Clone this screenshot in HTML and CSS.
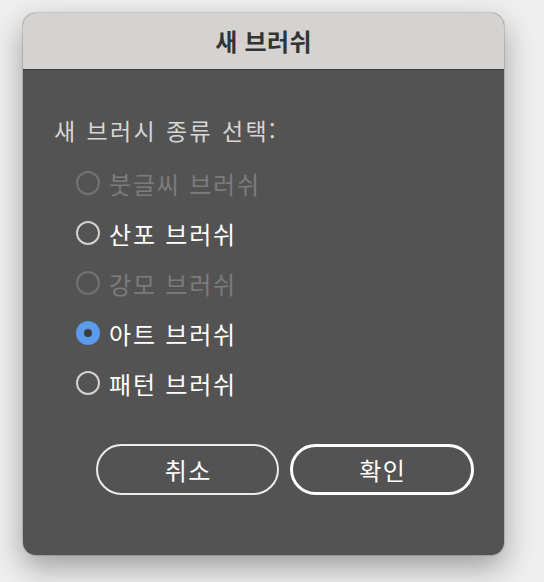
FILE: index.html
```html
<!DOCTYPE html>
<html lang="ko">
<head>
<meta charset="utf-8">
<title>새 브러쉬</title>
<link rel="stylesheet" href="styles.css">
</head>
<body>
<div class="dialog">
  <div class="titlebar">새 브러쉬</div>
  <div class="content">
    <div class="prompt">새 브러시 종류 선택:</div>
    <div class="options">
      <div class="option disabled"><span class="radio"></span><span class="label">붓글씨 브러쉬</span></div>
      <div class="option"><span class="radio"></span><span class="label">산포 브러쉬</span></div>
      <div class="option disabled"><span class="radio"></span><span class="label">강모 브러쉬</span></div>
      <div class="option checked"><span class="radio"></span><span class="label">아트 브러쉬</span></div>
      <div class="option"><span class="radio"></span><span class="label">패턴 브러쉬</span></div>
    </div>
    <div class="buttons">
      <div class="btn">취소</div>
      <div class="btn primary">확인</div>
    </div>
  </div>
</div>
</body>
</html>
```
FILE: styles.css
```css
html, body {
  margin: 0;
  padding: 0;
}
body {
  width: 544px;
  height: 582px;
  background: #efefef;
  font-family: "Noto Sans CJK KR", "Noto Sans", sans-serif;
  overflow: hidden;
}
.dialog {
  margin: 13px 0 0 23px;
  width: 481px;
  height: 542px;
  border-radius: 13px;
  overflow: hidden;
  background: #535353;
  box-shadow: 0 12px 30px rgba(0,0,0,0.35), 0 0 0 1px rgba(0,0,0,0.12);
  display: flex;
  flex-direction: column;
}
.titlebar {
  height: 56px;
  flex: none;
  background: #d4d3d1;
  border-bottom: 1px solid #3a3a3a;
  color: #333333;
  font-weight: 700;
  font-size: 24px;
  letter-spacing: 0.3px;
  line-height: 56px;
  text-align: center;
}
.content {
  padding: 45px 0 0 31px;
}
.prompt {
  color: #d6d6d6;
  font-size: 23px;
  line-height: 30px;
  letter-spacing: 2.4px;
}
.options {
  margin-top: 13px;
  padding-left: 22px;
  display: flex;
  flex-direction: column;
}
.option {
  height: 50px;
  display: flex;
  align-items: center;
  gap: 9px;
  color: #ffffff;
  font-size: 24px;
  letter-spacing: 1.8px;
}
.radio {
  width: 24px;
  height: 24px;
  box-sizing: border-box;
  border: 2px solid #d2d2d2;
  border-radius: 50%;
  flex: none;
  display: flex;
  align-items: center;
  justify-content: center;
}
.option.disabled {
  color: #7c7c7c;
}
.option.disabled .radio {
  border-color: #727272;
}
.option.checked .radio {
  border: none;
  background: #5a9bee;
}
.option.checked .radio::after {
  content: "";
  width: 8px;
  height: 8px;
  border-radius: 50%;
  background: #3c3c3c;
}
.buttons {
  margin-top: 36px;
  padding-left: 42px;
  display: flex;
  gap: 11px;
}
.btn {
  width: 183px;
  height: 51px;
  box-sizing: border-box;
  border: 2px solid #ececec;
  border-radius: 26px;
  color: #ffffff;
  font-size: 24px;
  letter-spacing: 1.5px;
  text-indent: 1.5px;
  display: flex;
  align-items: center;
  justify-content: center;
}
.btn.primary {
  width: 184px;
  border: 3.5px solid #ffffff;
}
```
